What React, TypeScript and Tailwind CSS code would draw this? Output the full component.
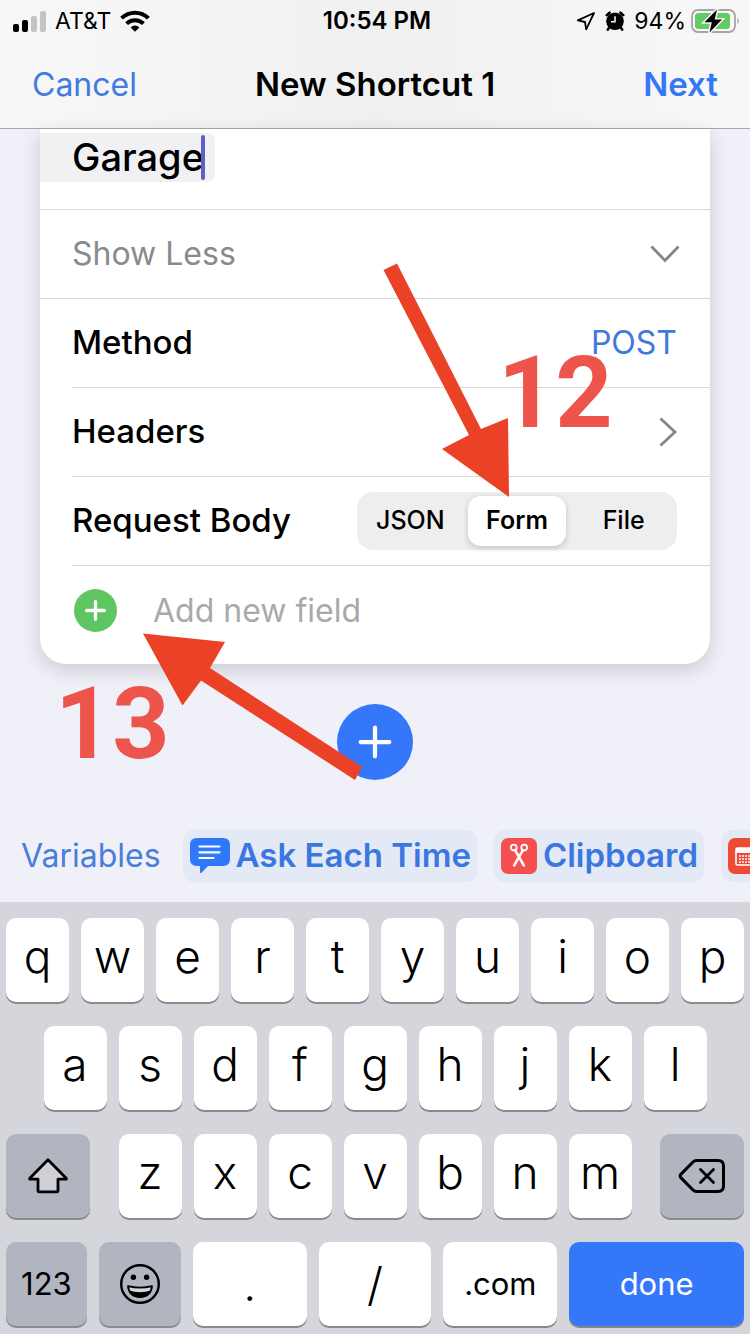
import React from "react";

const SIGNAL = [
  "h-[8px] bg-black",
  "h-[12px] bg-black",
  "h-[16px] bg-[#c4c4c6]",
  "h-[21px] bg-[#c4c4c6]",
];

function WifiIcon() {
  return (
    <svg viewBox="0 0 30 22" className="h-[22px] w-[30px]" aria-hidden="true">
      <g fill="none" stroke="#000" strokeWidth="4">
        <path d="M1.6 8.2a19 19 0 0 1 26.800 0" />
        <path d="M6.600 13.600a12 12 0 0 1 16.800 0" />
      </g>
      <path d="M10.600 17.400a6.200 6.200 0 0 1 8.800 0L15 21.800Z" />
    </svg>
  );
}

function LocationIcon() {
  return (
    <svg viewBox="0 0 20 20" className="size-[20px]" aria-hidden="true">
      <path d="M18 2 1.800 9.400l7.200 1.600 1.200 7.400Z" fill="none" stroke="#000" strokeWidth="1.800" strokeLinejoin="round" />
    </svg>
  );
}

function AlarmIcon() {
  return (
    <svg viewBox="0 0 20 20" className="size-[20px]" aria-hidden="true">
      <g fill="none" stroke="#000" strokeWidth="2.600" strokeLinecap="round">
        <path d="M1.800 4.200 4.600 1.600M18.200 4.200l-2.800-2.600M4.500 16l-1.700 2.600M15.500 16l1.700 2.600" />
      </g>
      <circle cx="10" cy="10.200" r="8.800" />
      <path d="M10 5.200v5.600H6" fill="none" stroke="#f3f3f4" strokeWidth="1.600" />
    </svg>
  );
}

function BatteryIcon() {
  return (
    <svg viewBox="0 0 50 26" className="h-[26px] w-[50px]" aria-hidden="true">
      <rect x="1" y="2" width="43" height="22" rx="6" fill="none" stroke="#a6a4aa" strokeWidth="1.800" />
      <path d="M46.500 9.500q3 3.500 0 7Z" fill="#a6a4aa" />
      <rect x="4" y="5" width="35" height="16" rx="3.500" fill="#62cb62" />
      <path d="M26 1.500 13.500 14.200h7.300L18.500 24.500 31 11.600h-7.300Z" fill="#000" stroke="#f5f5f6" strokeWidth="3" paintOrder="stroke" />
    </svg>
  );
}

function PlusIcon({ className }: { className: string }) {
  return (
    <svg viewBox="0 0 32 32" className={className} aria-hidden="true">
      <path d="M16 2.500v27M2.500 16h27" stroke="#fff" strokeLinecap="round" />
    </svg>
  );
}

function ChatIcon() {
  return (
    <svg viewBox="0 0 40 36" className="h-[36px] w-[40px]" aria-hidden="true">
      <path
        d="M7 0h26q7 0 7 7v14q0 7-7 7H18l-6.500 6.800q-1.500 1-1.500-1V28H7q-7 0-7-7V7q0-7 7-7Z"
        fill="#2f78fb"
      />
      <path d="M9.500 8.500h20M9.500 14.300h20M9.500 20h14" stroke="#fff" strokeWidth="2.200" strokeLinecap="round" />
    </svg>
  );
}

function ClipboardIcon() {
  return (
    <svg viewBox="0 0 36 36" className="size-[36px]" aria-hidden="true">
      <rect width="36" height="36" rx="7" fill="#f4504f" />
      <g fill="none" stroke="#fff">
        <circle cx="12.800" cy="9.600" r="2.900" strokeWidth="1.800" />
        <circle cx="23.200" cy="9.600" r="2.900" strokeWidth="1.800" />
        <path d="m14.200 12.300 8.600 15M21.800 12.300l-8.600 15" strokeWidth="2.600" strokeLinecap="round" />
      </g>
    </svg>
  );
}

function CalendarIcon() {
  return (
    <svg viewBox="0 0 36 36" className="size-[36px] shrink-0" aria-hidden="true">
      <rect width="36" height="36" rx="7" fill="#ee4b35" />
      <rect x="8" y="10" width="20" height="17" rx="1.500" fill="none" stroke="#fff" strokeWidth="1.600" />
      <path d="M8 10h20v5H8z" fill="#fff" />
      <path d="M11 18h14M11 21h14M11 24h14" stroke="#fff" strokeWidth="1.400" strokeDasharray="2 1" />
    </svg>
  );
}

function ShiftIcon() {
  return (
    <svg viewBox="0 0 40 36" className="h-[36px] w-[40px]" aria-hidden="true">
      <path
        d="M20 1.800 1.800 20.200q-.6 1 .6 1H10v11.400q0 1.200 1.200 1.200h17.600q1.200 0 1.200-1.200V21.200h7.600q1.200 0 .6-1Z"
        fill="#cfcfd6"
        stroke="#000"
        strokeWidth="2.800"
        strokeLinejoin="round"
      />
    </svg>
  );
}

function BackspaceIcon() {
  return (
    <svg viewBox="0 0 48 36" className="h-[36px] w-[48px]" aria-hidden="true">
      <g fill="none" stroke="#000" strokeLinecap="round" strokeLinejoin="round">
        <path
          d="M18.500 2.500H40q5.500 0 5.500 5.500v20q0 5.500-5.500 5.500H18.500q-2 0-3.500-1.500L2.800 19.600q-1.500-1.600 0-3.200L15 4q1.500-1.500 3.500-1.500Z"
          strokeWidth="3"
        />
        <path d="m22.500 11.500 13 13m0-13-13 13" strokeWidth="2.800" />
      </g>
    </svg>
  );
}

function EmojiIcon() {
  return (
    <svg viewBox="0 0 40 40" className="size-[40px]" aria-hidden="true">
      <circle cx="20" cy="20" r="18.800" fill="none" stroke="#000" strokeWidth="2.400" />
      <circle cx="13.400" cy="13.200" r="2.700" />
      <circle cx="26.600" cy="13.200" r="2.700" />
      <path d="M8 22.200q12 3 24 0-1 10.600-12 10.800Q9 32.800 8 22.200Z" fill="#d6d6dc" stroke="#000" strokeWidth="1.800" strokeLinejoin="round" />
      <path d="M9 26.500q11 3.500 22 0-3 6.800-11 6.800T9 26.500Z" />
    </svg>
  );
}

function Key({
  label,
  tone = "light",
  className = "",
  children,
}: {
  label?: string;
  tone?: "light" | "dark";
  className?: string;
  children?: React.ReactNode;
}) {
  const color = tone === "light" ? "bg-white" : "bg-[#b0b5bf]";
  return (
    <button
      type="button"
      aria-label={label}
      className={`flex h-[84px] items-center justify-center rounded-[10px] shadow-[0_2px_0_#8a8a8e] ${color} ${className}`}
    >
      {children}
    </button>
  );
}

function LetterKey({ letter }: { letter: string }) {
  return (
    <Key className="w-[63px] shrink pb-2 text-[46px] leading-[56px] font-[350]">{letter}</Key>
  );
}

function Pill({ icon, children, label }: { icon: React.ReactNode; children?: React.ReactNode; label?: string }) {
  return (
    <button
      type="button"
      aria-label={label}
      className="flex h-[52px] shrink-0 items-center gap-[6px] rounded-[10px] bg-[#e4e9f6] pr-[6px] pl-[7px] text-[33px] font-semibold text-[#3b77e0]"
    >
      {icon}
      {children}
    </button>
  );
}

export default function App() {
  const [body, setBody] = React.useState("Form");
  const [name, setName] = React.useState("Garage");
  return (
    <div className="flex min-h-screen flex-col overflow-hidden bg-[#f0f0f8] font-['Inter','Liberation_Sans',sans-serif] text-black">
      <header className="border-b border-[#a9a9ad] bg-linear-to-r from-[#f8f8f8] via-[#f0f0f0] to-[#f8f8f8]">
        <div className="grid h-[42px] grid-cols-3 items-center pr-[9px] pl-[13px] text-[23px]">
          <div className="flex items-center gap-[9px]">
            <div className="flex items-end gap-[3px]">
              {SIGNAL.map((bar) => (
                <span key={bar} className={`w-[6px] rounded-[2px] ${bar}`} />
              ))}
            </div>
            <span>AT&amp;T</span>
            <WifiIcon />
          </div>
          <span className="text-center text-[24px] font-semibold">10:54 PM</span>
          <div className="flex items-center justify-end gap-[5px]">
            <div className="flex items-center gap-[9px]">
              <LocationIcon />
              <AlarmIcon />
              <span>94%</span>
            </div>
            <BatteryIcon />
          </div>
        </div>
        <nav className="grid h-[86px] grid-cols-[1fr_auto_1fr] items-center px-8 text-[33px]">
          <button type="button" className="justify-self-start text-[32px] text-[#3f7be0]">Cancel</button>
          <h1 className="font-semibold">New Shortcut 1</h1>
          <button type="button" className="justify-self-end font-semibold text-[#3478f6]">Next</button>
        </nav>
      </header>

      <main className="relative px-10 text-[32px]">
        <section className="rounded-b-[26px] bg-white shadow-[0_6px_20px_rgba(0,0,0,0.16)]">
          <div className="flex h-[81px] items-start border-b border-[#d9d9dc] pt-1">
            <label className="flex h-[49px] items-center rounded-r-[8px] bg-[#f1f1f4] pr-[10px] pl-8">
              <input
                aria-label="Field name"
                value={name}
                onChange={(e) => setName(e.target.value)}
                className="field-sizing-content bg-transparent text-[38px] font-medium outline-none"
              />
              <span className="-ml-[3px] h-[45px] w-1 rounded-full bg-[#5c60c8]" />
            </label>
          </div>
          <button
            type="button"
            className="flex h-[89px] w-full items-center justify-between border-b border-[#d9d9dc] pr-[30px] pl-8 text-[#8a8a8d]"
          >
            Show Less
            <svg viewBox="0 0 30 18" className="h-[18px] w-[30px]" aria-hidden="true">
              <path d="m1.500 1.500 13.500 14 13.500-14" fill="none" stroke="#858588" strokeWidth="2.800" />
            </svg>
          </button>
          <div className="pl-8">
            <div className="flex h-[89px] items-center justify-between border-b border-[#d9d9dc] pr-[33px]">
              <span className="text-[33px] font-medium">Method</span>
              <button type="button" className="text-[#4079dc]">POST</button>
            </div>
            <button
              type="button"
              className="flex h-[89px] w-full items-center justify-between border-b border-[#d9d9dc] pr-[33px] text-[33px] font-medium"
            >
              Headers
              <svg viewBox="0 0 18 30" className="h-[30px] w-[18px]" aria-hidden="true">
                <path d="m1.500 1.500 14.500 13.500-14.500 13.500" fill="none" stroke="#858588" strokeWidth="2.800" />
              </svg>
            </button>
            <div className="flex h-[89px] items-center justify-between border-b border-[#d9d9dc] pr-[33px]">
              <span className="text-[33px] font-medium">Request Body</span>
              <div role="radiogroup" aria-label="Request Body" className="grid h-[58px] w-[320px] grid-cols-3 rounded-[16px] bg-[#eeeeef] text-[25px] font-medium">
                {["JSON", "Form", "File"].map((option) => (
                  <label
                    key={option}
                    className="m-1 flex items-center justify-center rounded-[13px] has-checked:bg-white has-checked:font-semibold has-checked:shadow-[0_2px_6px_rgba(0,0,0,0.18)]"
                  >
                    <input
                      type="radio"
                      name="request-body"
                      checked={body === option}
                      onChange={() => setBody(option)}
                      className="sr-only"
                    />
                    {option}
                  </label>
                ))}
              </div>
            </div>
            <div className="flex h-[98px] items-start gap-9 pt-[23px] pl-[2px]">
              <button type="button" aria-label="Add field" className="flex size-[43px] items-center justify-center rounded-full bg-[#5fc561]">
                <PlusIcon className="size-[21px] stroke-[5px]" />
              </button>
              <input
                aria-label="New field"
                placeholder="Add new field"
                className="h-[43px] min-w-0 flex-1 bg-transparent outline-none placeholder:text-[#a9a9ac]"
              />
            </div>
          </div>
        </section>

        <div className="flex justify-center pt-10 pb-[50px]">
          <button type="button" aria-label="Add action" className="flex size-[76px] items-center justify-center rounded-full bg-[#3478f9]">
            <PlusIcon className="size-[34px] stroke-[4px]" />
          </button>
        </div>

        <svg
          viewBox="0 0 750 701"
          className="pointer-events-none absolute top-0 left-0 h-[701px] w-[750px]"
          aria-hidden="true"
        >
          <g fill="#ea4127">
            <path d="M383.500 141 397 134.500 481 300l27-11 1 79-67-48 27-14Z" />
            <path d="M143 504.500 225 513l-15 26 152 99-7 13-154-99.500-18.500 25Z" />
          </g>
        </svg>
        <span className="pointer-events-none absolute top-[214px] left-[498px] font-['Roboto',sans-serif] text-[100px] leading-[100px] font-bold text-[#ec544c]">
          12
        </span>
        <span className="pointer-events-none absolute top-[545px] left-[55px] font-['Roboto',sans-serif] text-[100px] leading-[100px] font-bold text-[#ec544c]">
          13
        </span>
      </main>

      <div className="flex h-[72px] items-start gap-[17px] pl-[21px] text-[32px]">
        <button type="button" className="h-[52px] shrink-0 pr-[5px] text-[#4a7edb]">Variables</button>
        <Pill icon={<ChatIcon />}>Ask Each Time</Pill>
        <Pill icon={<ClipboardIcon />}>Clipboard</Pill>
        <Pill icon={<CalendarIcon />} label="Current Date" />
      </div>

      <div className="flex flex-1 flex-col gap-6 bg-[#d5d5dc] px-[6px] pt-4 pb-2">
        <div className="flex justify-center gap-3">
          {"qwertyuiop".split("").map((l) => (
            <LetterKey key={l} letter={l} />
          ))}
        </div>
        <div className="flex justify-center gap-3">
          {"asdfghjkl".split("").map((l) => (
            <LetterKey key={l} letter={l} />
          ))}
        </div>
        <div className="flex justify-between">
          <Key tone="dark" label="Shift" className="w-[84px]">
            <ShiftIcon />
          </Key>
          <div className="flex gap-3">
            {"zxcvbnm".split("").map((l) => (
              <LetterKey key={l} letter={l} />
            ))}
          </div>
          <Key tone="dark" label="Delete" className="w-[84px]">
            <BackspaceIcon />
          </Key>
        </div>
        <div className="grid grid-cols-[81fr_82fr_114fr_113fr_114fr_175fr] gap-3 text-[31px]">
          <Key tone="dark">123</Key>
          <Key tone="dark" label="Emoji">
            <EmojiIcon />
          </Key>
          <Key className="text-[46px] font-[350]">.</Key>
          <Key className="text-[46px] font-[350]">/</Key>
          <Key>.com</Key>
          <button type="button" className="h-[84px] rounded-[10px] bg-[#3478f9] text-white shadow-[0_2px_0_#7f8796]">
            done
          </button>
        </div>
      </div>
    </div>
  );
}
